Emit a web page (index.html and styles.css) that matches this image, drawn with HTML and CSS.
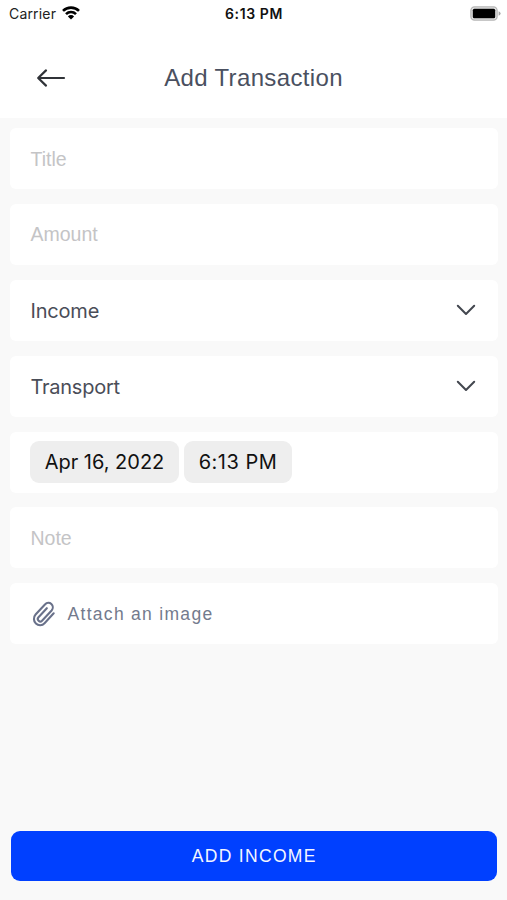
FILE: index.html
```html
<!DOCTYPE html>
<html lang="en">
<head>
<meta charset="utf-8">
<title>Add Transaction</title>
<link rel="stylesheet" href="styles.css">
</head>
<body>
<div class="screen">
  <div class="status">
    <div class="carrier"><span>Carrier</span>
      <svg width="18" height="14" viewBox="0 0 18 14"><g fill="none" stroke="#000" stroke-width="2.6"><path d="M1 4.9a11.3 11.3 0 0 1 16 0"/><path d="M4 8.1a7.1 7.1 0 0 1 10 0"/></g><path d="M5.9 10.4a4.4 4.4 0 0 1 6.2 0L9 13.6z"/></svg>
    </div>
    <div class="clock">6:13 PM</div>
    <svg class="battery" width="31" height="15" viewBox="0 0 31 15"><rect x=".9" y=".9" width="26.2" height="13.2" rx="3.6" fill="#e4e4e4" stroke="#b5b5b5" stroke-width="1.3"/><rect x="2.8" y="2.8" width="22.4" height="9.4" rx="1.5"/><path d="M28.6 5.2q2 .8 2 2.300t-2 2.300z" fill="#a5a5a5"/></svg>
  </div>
  <header class="header">
    <svg class="back" width="30" height="20" viewBox="0 0 30 20"><path d="M28 10H2.5M10 2.4L2.200 10L10 17.600" fill="none" stroke="#303338" stroke-width="2.2" stroke-linecap="round" stroke-linejoin="round"/></svg>
    <h1>Add Transaction</h1>
  </header>
  <main class="form">
    <div class="field hint"><span>Title</span></div>
    <div class="field hint"><span>Amount</span></div>
    <div class="field select"><span class="income">Income</span><svg width="20" height="12" viewBox="0 0 20 12"><path d="M1.800 1.800L10 10l8.200-8.200" fill="none" stroke="#43474f" stroke-width="2" stroke-linecap="round" stroke-linejoin="round"/></svg></div>
    <div class="field select"><span class="transport">Transport</span><svg width="20" height="12" viewBox="0 0 20 12"><path d="M1.800 1.800L10 10l8.200-8.200" fill="none" stroke="#43474f" stroke-width="2" stroke-linecap="round" stroke-linejoin="round"/></svg></div>
    <div class="field dates"><span class="chip date">Apr 16, 2022</span><span class="chip time">6:13 PM</span></div>
    <div class="field hint"><span>Note</span></div>
    <div class="field attach">
      <svg width="25" height="26" viewBox="0 0 24 24" preserveAspectRatio="none"><path d="M21.800 11.400l-8.800 9.100a5.700 5.700 0 0 1-8.600-8l9.200-9.500a4.100 4.100 0 0 1 6.200 5.700l-9.200 9.500a2.300 2.300 0 0 1-3.400-3.200l8-8.300" fill="none" stroke="#69718a" stroke-width="2" stroke-linecap="round" stroke-linejoin="round"/></svg>
      <span>Attach an image</span>
    </div>
  </main>
  <div class="submit"><span>ADD INCOME</span></div>
</div>
</body>
</html>
```
FILE: styles.css
```css
* { box-sizing: border-box; }
body { margin: 0; background: #f9f9f9; font-family: "Liberation Sans", Arial, sans-serif; }
.screen { height: 900px; display: flex; flex-direction: column; }
svg { display: block; flex: none; }
.status { height: 28px; padding: 0 6px 2px 9px; background: #fff; display: grid; grid-template-columns: 1fr auto 1fr; align-items: center; font-family: Inter, sans-serif; font-size: 14px; }
.carrier { display: flex; align-items: center; gap: 6px; color: #222; letter-spacing: .18px; }
.clock { font-weight: 600; color: #111; letter-spacing: .6px; margin-right: 2px; }
.battery { justify-self: end; }
.header { height: 90px; padding: 10px 36px 0; background: #fff; display: grid; grid-template-columns: 30px 1fr 30px; align-items: center; }
h1 { margin: 0; text-align: center; font-size: 24px; line-height: 28px; font-weight: 400; color: #4a5060; letter-spacing: .35px; }
.form { padding: 10px 9.5px 0 10px; display: grid; gap: 14.9px; grid-auto-rows: 61px; }
.field { background: #fff; border-radius: 6px; padding: 0 20.500px; display: flex; align-items: center; }
.hint { font-size: 19.5px; color: #c4c4c6; }
.hint span, .select span, .attach span, .submit span { padding-top: 1px; }
.select { justify-content: space-between; font-family: Inter, sans-serif; font-size: 20px; color: #4a4d58; padding-right: 22px; }
.income { letter-spacing: -.2px; }
.transport { letter-spacing: -.25px; }
.dates { gap: 5px; padding-left: 20px; font-family: Inter, sans-serif; font-size: 20px; color: #111; }
.chip { height: 42px; border-radius: 9px; background: #eee; display: flex; align-items: center; justify-content: center; white-space: nowrap; }
.date { width: 149px; }
.time { width: 108px; letter-spacing: .5px; }
.attach { gap: 12px; font-size: 17.5px; letter-spacing: 1.3px; color: #737a8d; }
.submit { margin: auto 10px 19.5px 10.5px; height: 49.5px; border-radius: 9px; background: #0040ff; color: #f4f6ff; display: flex; align-items: center; justify-content: center; font-size: 17.5px; letter-spacing: 1.3px; }
.submit span { padding-left: 1px; }
```
